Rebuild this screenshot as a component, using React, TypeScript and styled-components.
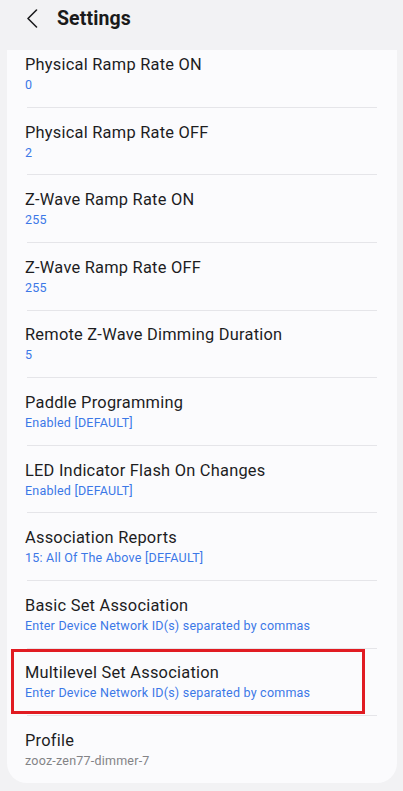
import React from "react";
import styled, { createGlobalStyle } from "styled-components";

const GlobalStyle = createGlobalStyle`
  html, body {
    margin: 0;
    padding: 0;
    background: #f2f2f4;
    font-family: Roboto, "Noto Sans", "Liberation Sans", sans-serif;
  }
`;

type Setting = {
  title: string;
  value: string;
  muted?: boolean;
  highlight?: boolean;
};

const settings: Setting[] = [
  { title: "Physical Ramp Rate ON", value: "0" },
  { title: "Physical Ramp Rate OFF", value: "2" },
  { title: "Z-Wave Ramp Rate ON", value: "255" },
  { title: "Z-Wave Ramp Rate OFF", value: "255" },
  { title: "Remote Z-Wave Dimming Duration", value: "5" },
  { title: "Paddle Programming", value: "Enabled [DEFAULT]" },
  { title: "LED Indicator Flash On Changes", value: "Enabled [DEFAULT]" },
  { title: "Association Reports", value: "15: All Of The Above [DEFAULT]" },
  { title: "Basic Set Association", value: "Enter Device Network ID(s) separated by commas" },
  {
    title: "Multilevel Set Association",
    value: "Enter Device Network ID(s) separated by commas",
    highlight: true,
  },
  { title: "Profile", value: "zooz-zen77-dimmer-7", muted: true },
];

function App() {
  return (
    <Page>
      <GlobalStyle />
      <Header>
        <BackButton aria-label="Back">
          <svg width="12" height="19" viewBox="0 0 12 19" fill="none">
            <polyline
              points="10.5,1 2,9.5 10.5,18"
              stroke="#1c1c1e"
              strokeWidth="1.6"
              strokeLinecap="round"
              strokeLinejoin="round"
            />
          </svg>
        </BackButton>
        <Title>Settings</Title>
      </Header>

      <Card>
        <List>
          {settings.map((s, i) => (
            <Row key={s.title} $divider={i > 0}>
              <RowTitle>{s.title}</RowTitle>
              <RowValue $muted={s.muted}>{s.value}</RowValue>
              {s.highlight && <Highlight />}
            </Row>
          ))}
        </List>
      </Card>
    </Page>
  );
}

const Page = styled.div`
  width: 403px;
  height: 791px;
  overflow: hidden;
  background: #f2f2f4;
`;

const Header = styled.div`
  display: flex;
  align-items: center;
  height: 37px;
  padding-left: 26px;
  margin-bottom: 13px;
`;

const BackButton = styled.div`
  display: flex;
  align-items: center;
  width: 31px;
  height: 20px;
`;

const Title = styled.h1`
  margin: 0;
  font-size: 19.5px;
  font-weight: 700;
  color: #1a1a1a;
  letter-spacing: 0.1px;
`;

const Card = styled.div`
  margin: 0 6px 0 7px;
  background: #fbfbfd;
  border-radius: 0 0 20px 20px;
  overflow: hidden;
`;

/* list is scrolled a little, so the first row's top is cut off */
const List = styled.div`
  margin-top: -10.8px;
`;

const Row = styled.div<{ $divider?: boolean }>`
  position: relative;
  display: flex;
  flex-direction: column;
  gap: 2px;
  margin: 0 20px;
  padding: 14.8px 0 13.8px;
  border-top: 1px solid ${(p) => (p.$divider ? "#e5e5e9" : "transparent")};
`;

const RowTitle = styled.div`
  margin-left: -2px;
  font-size: 16.4px;
  line-height: 20px;
  letter-spacing: 0.24px;
  color: #1d1d1f;
  white-space: nowrap;
`;

const RowValue = styled.div<{ $muted?: boolean }>`
  margin-left: -2px;
  font-size: 12.5px;
  line-height: 16px;
  letter-spacing: 0.22px;
  color: ${(p) => (p.$muted ? "#838386" : "#3b78e7")};
  white-space: nowrap;
`;

const Highlight = styled.div`
  position: absolute;
  left: -16px;
  top: 0;
  width: 354px;
  height: 65px;
  box-sizing: border-box;
  border: 3.5px solid #e11b22;
  pointer-events: none;
`;

export default App;
